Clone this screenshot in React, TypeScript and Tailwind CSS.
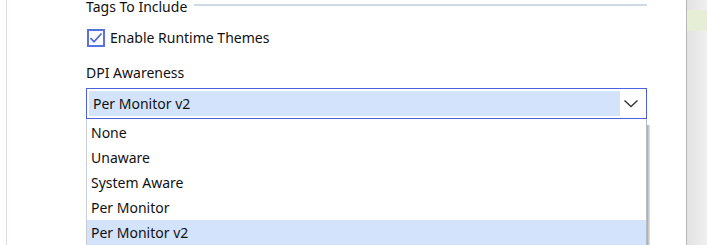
import React from 'react'

const options = ['None', 'Unaware', 'System Aware', 'Per Monitor', 'Per Monitor v2']

export default function App() {
  const selected = 'Per Monitor v2'

  return (
    <div
      className="flex h-[245px] w-[707px] overflow-hidden bg-white text-[14px] text-[#111111]"
      style={{ fontFamily: '"Noto Sans", "Open Sans", sans-serif' }}
    >
      {/* left edge */}
      <div className="w-[6px] shrink-0" />
      <div className="w-px shrink-0 bg-[#dadde3]" />

      {/* settings panel */}
      <div className="flex w-[679px] shrink-0 flex-col pl-[79px] pr-[39px]">
        {/* Section header */}
        <div className="-mt-[2px] flex h-[18px] items-center">
          <span className="leading-[18px]">Tags To Include</span>
          <div className="ml-[7px] mt-[-4px] h-[2px] flex-1 bg-[#d2daea]" />
        </div>

        {/* Checkbox */}
        <label className="mt-[12px] flex h-[20px] items-center">
          <span className="ml-[1px] flex h-[18px] w-[18px] items-center justify-center border-[2px] border-[#5a72e0] bg-white">
            <svg width="14" height="12" viewBox="0 0 14 12">
              <path d="M1.5 6.2 L5 9.8 L12.5 1.5" fill="none" stroke="#4a66dc" strokeWidth="1.7" />
            </svg>
          </span>
          <span className="ml-[5px] leading-[18px]">Enable Runtime Themes</span>
        </label>

        {/* DPI label */}
        <div className="mt-[16px] h-[18px] leading-[18px]">DPI Awareness</div>

        {/* Combo */}
        <div className="mt-[6px] flex h-[31px] items-center border border-[#4c5fdd] bg-white pl-[2px] pr-[4px]">
          <div className="flex h-[25px] flex-1 items-center bg-[#d3e3fc] pl-[4px]">{selected}</div>
          <div className="flex w-[22px] justify-center">
            <svg width="16" height="9" viewBox="0 0 16 9">
              <path d="M1.5 1.5 L8 7.5 L14.5 1.5" fill="none" stroke="#3a3a3a" strokeWidth="1.5" />
            </svg>
          </div>
        </div>

        {/* Dropdown list */}
        <div className="relative flex flex-col border-x border-l-[#c9cdd4] border-r-[#b4bcc8] bg-white pt-px">
          {options.map((o) => (
            <div
              key={o}
              className={`flex h-[25px] items-center pl-[4px] ${o === selected ? 'bg-[#d3e3fc]' : ''}`}
            >
              {o}
            </div>
          ))}
          <div className="absolute right-[-4px] top-[6px] bottom-0 w-[3px] bg-gradient-to-r from-[#a8a8a8] to-[#e6e6e6]" />
        </div>
      </div>

      {/* right neighbour panel */}
      <div className="flex w-[21px] shrink-0 flex-col border-l border-[#b9b9b9] bg-gradient-to-r from-[#e2e2e2] to-[#f0f0f0]">
        <div className="mt-[10px] h-[21px] bg-[#e6efd6]" />
      </div>
    </div>
  )
}
